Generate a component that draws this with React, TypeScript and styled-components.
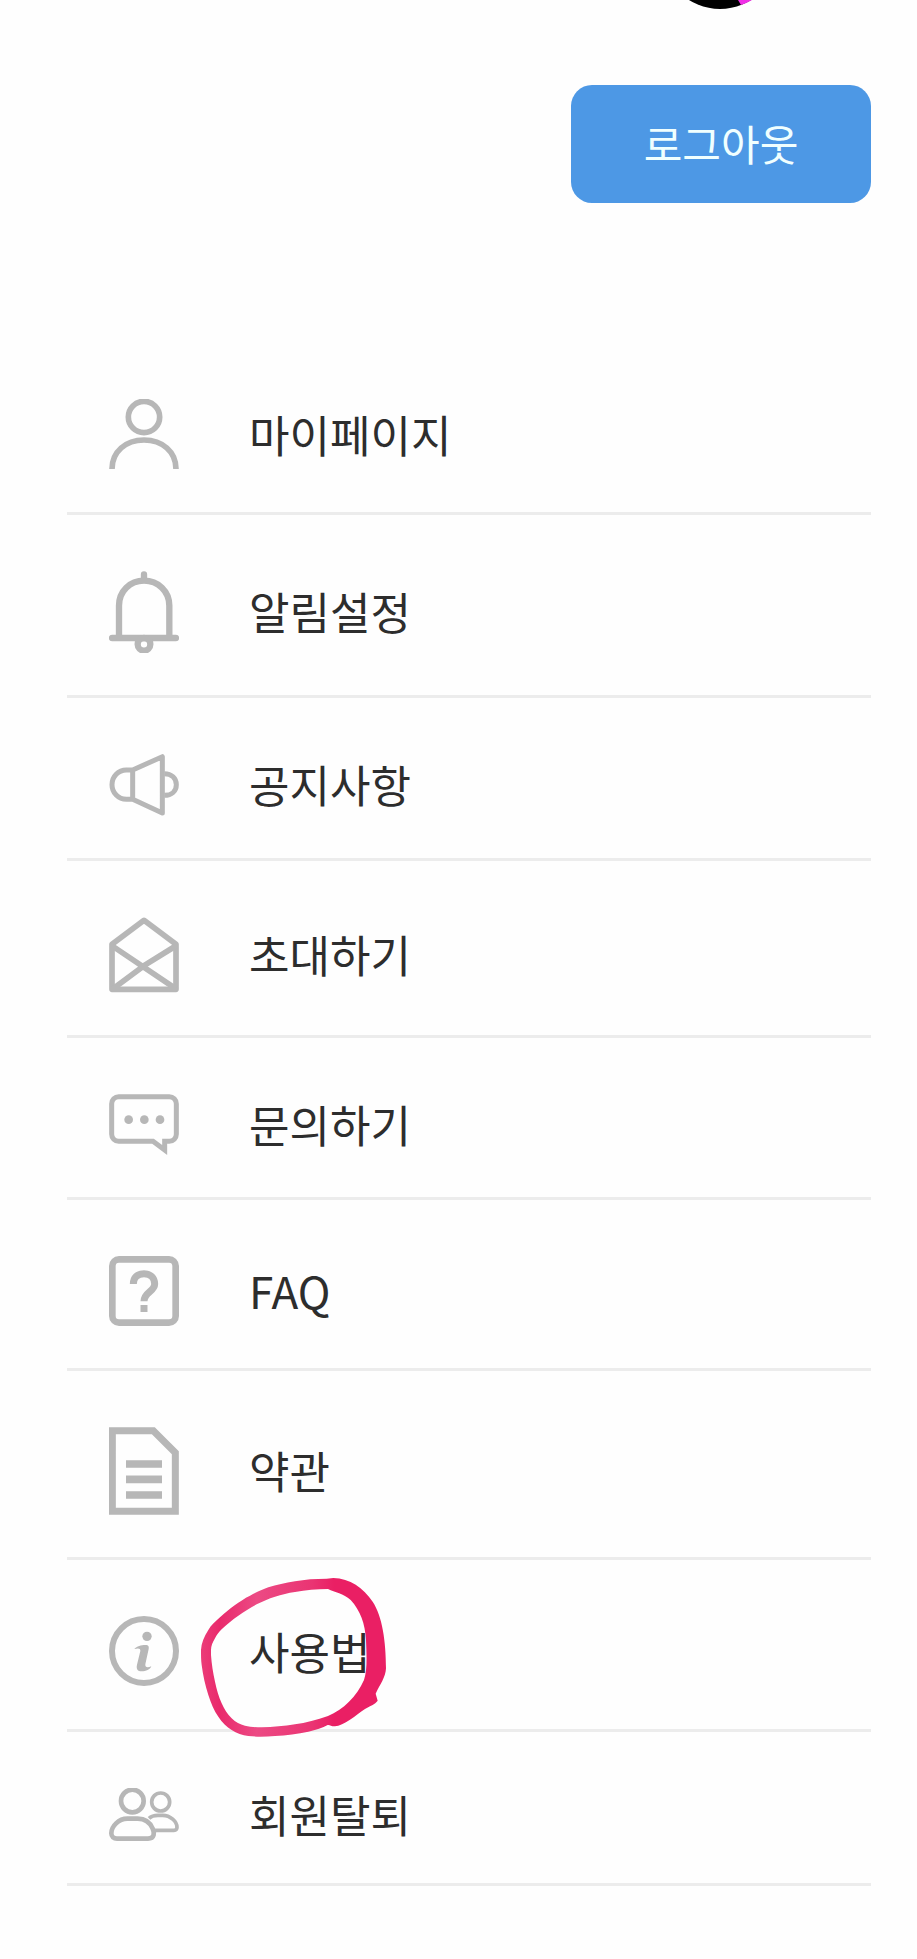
import React from "react";
import styled, { createGlobalStyle } from "styled-components";

const GlobalStyle = createGlobalStyle`
  *, *::before, *::after { box-sizing: border-box; }
  body {
    margin: 0;
    background: #fefefe;
    color: #2d2d2d;
    font-family: "Noto Sans CJK KR", "Noto Sans", sans-serif;
  }
`;

const Page = styled.main`
  padding: 0 46px 72px 67px;
`;

const Header = styled.header`
  display: flex;
  justify-content: flex-end;
`;

const Account = styled.div`
  display: flex;
  flex-direction: column;
  align-items: center;
  gap: 76px;
  width: 300px;
`;

const AvatarEdge = styled.svg`
  display: block;
  width: 116px;
  height: 9px;
`;

const LogoutButton = styled.button`
  width: 100%;
  height: 118px;
  padding: 0 0 2px;
  border: 0;
  border-radius: 21px;
  background: #4d98e5;
  color: #f0ffff;
  font-family: inherit;
  font-size: 42px;
  line-height: 60px;
  cursor: pointer;
`;

const Menu = styled.ul`
  list-style: none;
  margin: 140px 0 0;
  padding: 0;
`;

const MenuItem = styled.li`
  position: relative;
  border-bottom: 3px solid #ececec;
`;

const MenuLink = styled.a<{ $iconHeight: number }>`
  display: flex;
  align-items: center;
  gap: 70px;
  height: ${(p) => p.$iconHeight + 98}px;
  padding: 56px 42px 42px;
  color: inherit;
  text-decoration: none;
  font-size: 44px;
  line-height: 60px;
`;

const Label = styled.span`
  padding-bottom: 2px;
`;

const Icon = styled.svg`
  flex: none;
  display: block;
  width: 70px;
  fill: none;
  stroke: #b7b7b7;
`;

const PenMark = styled.svg`
  position: absolute;
  left: 133px;
  top: 16px;
  width: 188px;
  height: 162px;
  pointer-events: none;
`;

type Entry = { label: string; height: number; drawing: React.ReactNode; marked?: boolean };

/* Every icon is drawn on a grid of three units per pixel, 210 units wide. */
const entries: Entry[] = [
  {
    label: "마이페이지",
    height: 71,
    drawing: (
      <g strokeWidth="17">
        <circle cx="105" cy="54" r="47" />
        <path d="M9 210C9 158 50 123 105 123S201 158 201 210" />
      </g>
    ),
  },
  {
    label: "알림설정",
    height: 82,
    drawing: (
      <g strokeWidth="19" strokeLinecap="round">
        <path d="M105 10V27M9 201H201" />
        <path d="M30 198V104C30 60 63 29 105 29S181 60 181 104V198" />
        <circle cx="105" cy="220" r="19" />
      </g>
    ),
  },
  {
    label: "공지사항",
    height: 62,
    drawing: (
      <g strokeWidth="15" strokeLinejoin="round">
        <path d="M71 48H52A43 44 0 0 0 52 136H71ZM71 48L160 8V177L71 136" />
        <path d="M166 59C188 59 202 73 202 92S188 124 166 124" />
      </g>
    ),
  },
  {
    label: "초대하기",
    height: 76,
    drawing: (
      <g strokeWidth="17" strokeLinejoin="round">
        <path d="M9 82L105 10L201 82V217H9Z" />
        <path d="M10 87L200 215M200 87L105 146L12 215" />
      </g>
    ),
  },
  {
    label: "문의하기",
    height: 61,
    drawing: (
      <>
        <path
          strokeWidth="15"
          d="M29 8H181A21 21 0 0 1 202 29V121A21 21 0 0 1 181 142H167V168L132 142H29A21 21 0 0 1 8 121V29A21 21 0 0 1 29 8Z"
        />
        <g fill="#b7b7b7" stroke="none">
          <circle cx="59" cy="77" r="13" />
          <circle cx="106" cy="77" r="13" />
          <circle cx="153" cy="77" r="13" />
        </g>
      </>
    ),
  },
  {
    label: "FAQ",
    height: 70,
    drawing: (
      <g strokeWidth="20">
        <rect x="10" y="10" width="190" height="190" rx="20" />
        <path
          strokeWidth="21"
          d="M73 84C73 64 86 53 105 53S137 66 137 84C137 107 105 108 105 136M105 147V168"
        />
      </g>
    ),
  },
  {
    label: "약관",
    height: 88,
    drawing: (
      <>
        <path strokeWidth="21" d="M10 11H133L199 77V253H10Z" />
        <path strokeWidth="23" d="M51 111H159M51 157H159M51 204H159" />
      </>
    ),
  },
  {
    label: "사용법",
    height: 71,
    marked: true,
    drawing: (
      <>
        <circle cx="105" cy="105" r="96" strokeWidth="18" />
        <g fill="#b7b7b7" stroke="none">
          <circle cx="114" cy="61" r="14" />
          <path d="M76 99C84 89 101 86 113 87C119 88 120 93 119 99L109 145C108 154 115 156 127 151C123 161 111 166 98 166C86 166 81 159 84 146L94 105C95 96 87 96 76 99Z" />
        </g>
      </>
    ),
  },
  {
    label: "회원탈퇴",
    height: 53,
    drawing: (
      <>
        <g strokeWidth="14">
          <circle cx="70" cy="39" r="34" />
          <path d="M24 152H117C137 152 137 134 131 122C123 103 106 92 86 92H55C29 92 7 115 7 136C7 146 14 152 24 152Z" />
        </g>
        <g strokeWidth="11">
          <circle cx="155" cy="42" r="27" />
          <path d="M120 91C127 84 136 82 147 82H161C184 82 204 101 204 118C204 124 200 127 195 127H138" />
        </g>
      </>
    ),
  },
];

export default function App() {
  return (
    <>
      <GlobalStyle />
      <Page>
        <Header>
          <Account>
            <AvatarEdge viewBox="0 0 116 9" aria-hidden="true">
              <circle cx="57" cy="-49" r="58" fill="#000" />
              <path d="M75 0L78 5Q84 3 89 0Z" fill="#f02ee6" />
            </AvatarEdge>
            <LogoutButton type="button">로그아웃</LogoutButton>
          </Account>
        </Header>
        <nav>
          <Menu>
            {entries.map(({ label, height, drawing, marked }) => (
              <MenuItem key={label}>
                <MenuLink href="#" $iconHeight={height}>
                  <Icon viewBox={`0 0 210 ${height * 3}`} height={height} aria-hidden="true">
                    {drawing}
                  </Icon>
                  <Label>{label}</Label>
                </MenuLink>
                {marked && (
                  <PenMark viewBox="420 48 564 486" aria-hidden="true">
                    <defs>
                      <linearGradient id="ink" x1="0" y1="0" x2="1" y2="0">
                        <stop offset="0" stopColor="#eb3c78" />
                        <stop offset="0.1" stopColor="#e92a6c" />
                        <stop offset="0.3" stopColor="#ec4a84" />
                        <stop offset="0.6" stopColor="#ea3473" />
                        <stop offset="0.72" stopColor="#ea1f64" />
                        <stop offset="1" stopColor="#ea1f64" />
                      </linearGradient>
                    </defs>
                    <path
                      fill="url(#ink)"
                      fillRule="evenodd"
                      d="M800 56C765 56 735 58 705 64C675 69 650 74 625 82C605 89 588 97 570 107C553 115 540 125 525 135C508 147 495 158 480 172C465 186 453 195 445 210C432 230 424 250 423 270C423 285 423 300 425 315C429 347 436 377 445 405C453 430 462 452 475 470C487 488 500 501 515 510C530 520 547 526 565 528C592 531 618 530 645 528C680 526 713 521 745 515C768 510 788 503 803 495C810 494 815 500 825 499C850 498 890 464 915 447C930 437 945 434 953 422L947 401C960 374 977 352 978 325C978 245 967 168 938 125C910 84 870 55 820 54ZM804 87C770 87 737 90 705 96C685 99 665 104 645 110C626 116 608 124 590 133C571 143 553 155 535 167C518 179 500 193 485 208C477 216 470 225 465 235C458 247 453 258 453 270V285C455 312 459 339 465 365C470 388 476 410 485 430C493 448 502 463 515 475C527 487 540 494 555 497C570 501 588 502 605 502C639 501 672 498 705 493C738 488 770 480 804 468C850 449 890 410 912 360C922 330 920 290 918 240C915 190 901 152 872 120C850 100 825 97 804 87Z"
                    />
                  </PenMark>
                )}
              </MenuItem>
            ))}
          </Menu>
        </nav>
      </Page>
    </>
  );
}
